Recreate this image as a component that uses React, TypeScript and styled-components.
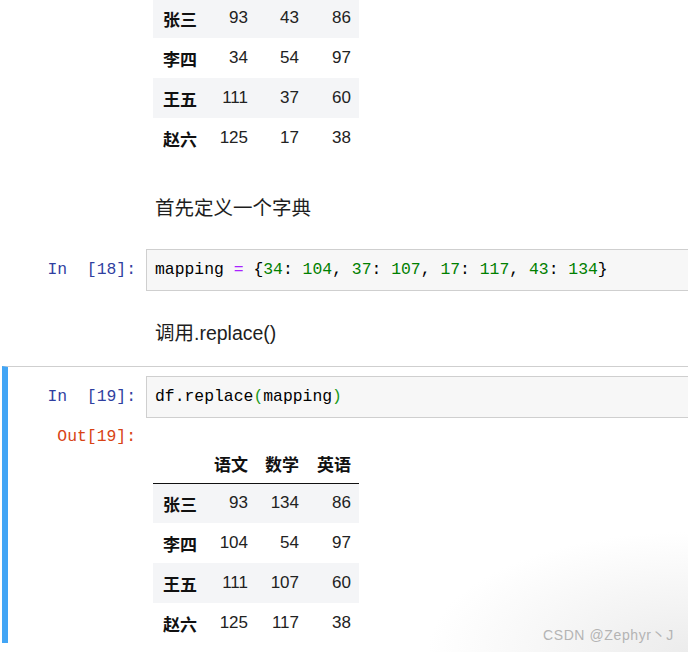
import styled, { createGlobalStyle } from "styled-components";

const GlobalStyle = createGlobalStyle`
  html, body {
    margin: 0;
    padding: 0;
    background: #ffffff;
  }
  body {
    width: 688px;
    height: 652px;
    overflow: hidden;
  }
`;

const Page = styled.div`
  position: relative;
  width: 688px;
  height: 652px;
  overflow: hidden;
  background: radial-gradient(ellipse 260px 120px at 100% 100%, #ececec 0%, #ffffff 100%);
`;

const Notebook = styled.div`
  width: 760px;
  margin-top: -3px;
  display: flex;
  flex-direction: column;
`;

const Cell = styled.div<{ $selected?: boolean; $top?: number; $bottom?: number }>`
  display: grid;
  grid-template-columns: 138px 1fr;
  margin-left: 2px;
  border-left: 6px solid ${(p) => (p.$selected ? "#42a5f5" : "transparent")};
  border-top: 1px solid ${(p) => (p.$selected ? "#cfcfcf" : "transparent")};
  padding-top: ${(p) => p.$top ?? 0}px;
  padding-bottom: ${(p) => p.$bottom ?? 0}px;
  align-items: start;
`;

const Prompt = styled.div<{ $out?: boolean }>`
  font-family: "Liberation Mono", "DejaVu Sans Mono", monospace;
  font-size: 16.4px;
  line-height: 20px;
  color: ${(p) => (p.$out ? "#d84315" : "#303f9f")};
  text-align: right;
  padding-right: 10px;
  padding-top: ${(p) => (p.$out ? 9 : 11)}px;
  white-space: pre;
`;

const InputBox = styled.div`
  border: 1px solid #cfcfcf;
  border-right: none;
  background: #f7f7f7;
  padding: 10px 8px;
  font-family: "Liberation Mono", "DejaVu Sans Mono", monospace;
  font-size: 16.4px;
  line-height: 20px;
  color: #000;
  white-space: pre;
`;

const Tok = styled.span<{ $kind: "num" | "op" | "paren" }>`
  color: ${(p) => (p.$kind === "num" ? "#008000" : p.$kind === "op" ? "#aa22ff" : "#1a9a1a")};
`;

const Markdown = styled.div`
  padding-left: 9px;
  font-family: "Liberation Sans", "Noto Sans CJK SC", sans-serif;
  font-size: 19.5px;
  line-height: 28px;
  color: #1e1e1e;
`;

const OutputArea = styled.div<{ $top?: number }>`
  padding-left: 7px;
  padding-top: ${(p) => p.$top ?? 0}px;
`;

const Table = styled.table`
  border-collapse: collapse;
  font-family: "Liberation Sans", "Noto Sans CJK SC", sans-serif;
  font-size: 17px;
  color: #222;
`;

const HeadRow = styled.tr`
  height: 39px;
  border-bottom: 1.5px solid #111;
`;

const Row = styled.tr<{ $shade: boolean }>`
  height: 40px;
  background: ${(p) => (p.$shade ? "#f4f5f7" : "transparent")};
`;

const Th = styled.th<{ $w: number }>`
  width: ${(p) => p.$w}px;
  box-sizing: border-box;
  padding: 0 8px 0 0;
  text-align: right;
  white-space: nowrap;
  font-weight: bold;
  font-family: "Noto Sans CJK SC", "Liberation Sans", sans-serif;
  color: #111;
`;

const IndexCell = styled.th`
  width: 53px;
  box-sizing: border-box;
  padding: 0 8px 0 10px;
  text-align: left;
  white-space: nowrap;
  font-weight: bold;
  font-family: "Noto Sans CJK SC", sans-serif;
  color: #111;
`;

const Td = styled.td<{ $w: number }>`
  width: ${(p) => p.$w}px;
  box-sizing: border-box;
  padding: 0 8px 0 0;
  text-align: right;
`;

const Watermark = styled.div`
  position: absolute;
  left: 543px;
  top: 624px;
  font-family: "Liberation Sans", "Noto Sans CJK SC", sans-serif;
  font-size: 14px;
  color: #b4b4b4;
  letter-spacing: 0.6px;
`;

const widths = [50, 51, 52];

type DataRow = [string, number, number, number];

function Frame({ rows, header }: { rows: DataRow[]; header?: boolean }) {
  return (
    <Table>
      <tbody>
        {header && (
          <HeadRow>
            <IndexCell />
            {["语文", "数学", "英语"].map((h, i) => (
              <Th key={h} $w={widths[i]}>
                {h}
              </Th>
            ))}
          </HeadRow>
        )}
        {rows.map((r, i) => (
          <Row key={r[0]} $shade={i % 2 === 0}>
            <IndexCell>{r[0]}</IndexCell>
            {r.slice(1).map((v, j) => (
              <Td key={j} $w={widths[j]}>
                {v}
              </Td>
            ))}
          </Row>
        ))}
      </tbody>
    </Table>
  );
}

const before: DataRow[] = [
  ["张三", 93, 43, 86],
  ["李四", 34, 54, 97],
  ["王五", 111, 37, 60],
  ["赵六", 125, 17, 38],
];

const after: DataRow[] = [
  ["张三", 93, 134, 86],
  ["李四", 104, 54, 97],
  ["王五", 111, 107, 60],
  ["赵六", 125, 117, 38],
];

const pairs: [string, string][] = [
  ["34", "104"],
  ["37", "107"],
  ["17", "117"],
  ["43", "134"],
];

export default function App() {
  return (
    <Page>
      <GlobalStyle />
      <Notebook>
        <Cell>
          <div />
          <OutputArea>
            <Frame rows={before} />
          </OutputArea>
        </Cell>

        <Cell $top={35} $bottom={26}>
          <div />
          <Markdown>首先定义一个字典</Markdown>
        </Cell>

        <Cell>
          <Prompt>{"In\u00a0\u00a0[18]:"}</Prompt>
          <InputBox>
            mapping <Tok $kind="op">=</Tok> {"{"}
            {pairs.map(([k, v], i) => (
              <span key={k}>
                <Tok $kind="num">{k}</Tok>: <Tok $kind="num">{v}</Tok>
                {i < pairs.length - 1 ? ", " : ""}
              </span>
            ))}
            {"}"}
          </InputBox>
        </Cell>

        <Cell $top={27} $bottom={19}>
          <div />
          <Markdown>调用.replace()</Markdown>
        </Cell>

        <Cell $selected $top={9}>
          <Prompt>{"In\u00a0\u00a0[19]:"}</Prompt>
          <InputBox>
            df.replace<Tok $kind="paren">(</Tok>mapping<Tok $kind="paren">)</Tok>
          </InputBox>
          <Prompt $out>Out[19]:</Prompt>
          <OutputArea $top={26}>
            <Frame rows={after} header />
          </OutputArea>
        </Cell>
      </Notebook>
      <Watermark>CSDN @Zephyr丶J</Watermark>
    </Page>
  );
}
